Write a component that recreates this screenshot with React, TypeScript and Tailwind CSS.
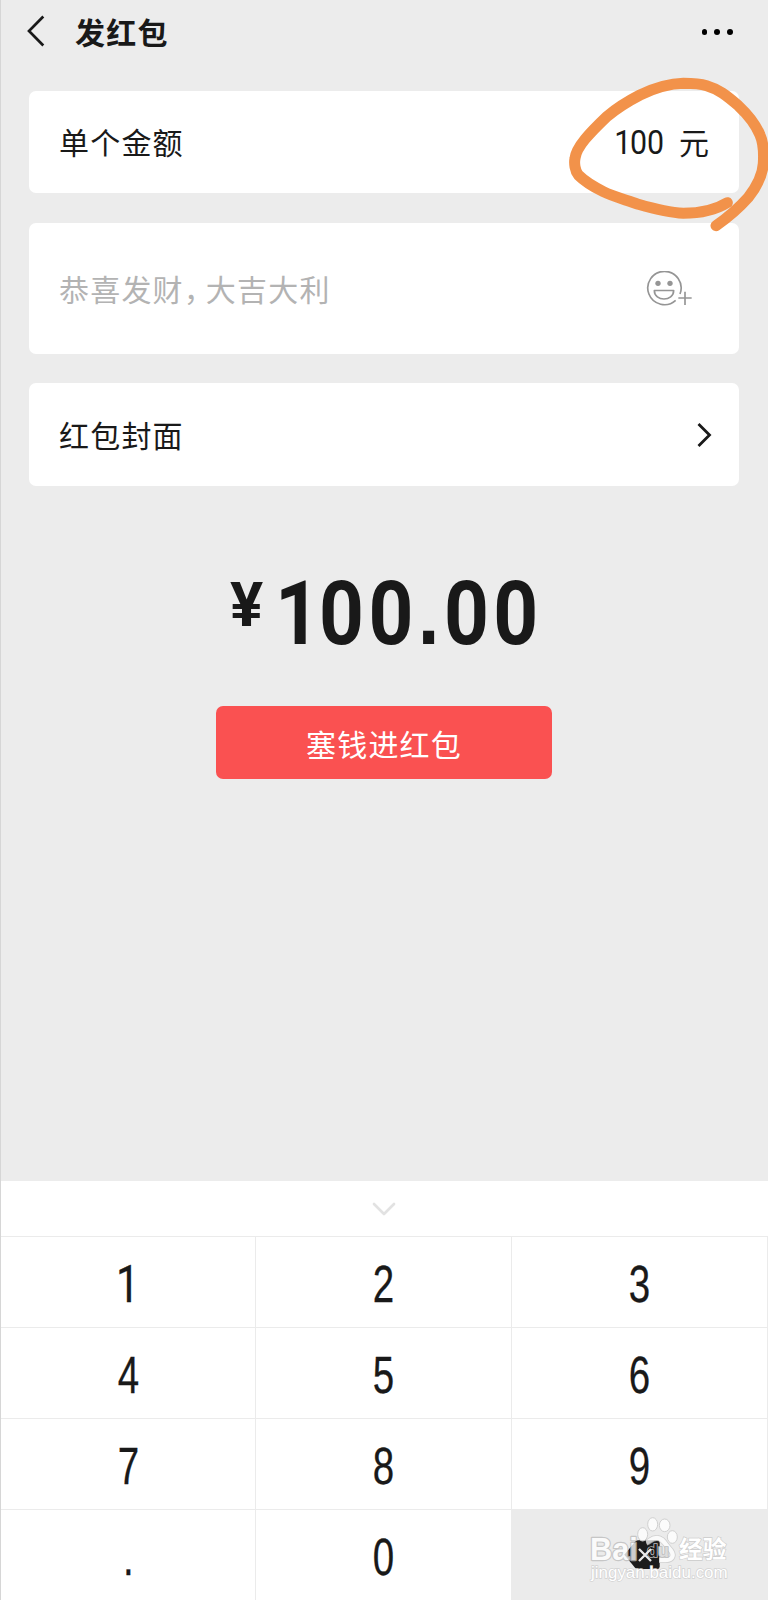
import { ChevronDown } from 'lucide-react';

const keys = ['1', '2', '3', '4', '5', '6', '7', '8', '9', '.', '0'];

function BackIcon() {
  return (
    <svg className="h-8 w-5" viewBox="0 0 20 32" fill="none" stroke="#191919" strokeWidth="2.7">
      <path d="M17.300 1.500 3 16 17.300 30.500" />
    </svg>
  );
}

function EmojiPlusIcon() {
  return (
    <svg className="h-9 w-[46px]" viewBox="0 0 138 108" fill="none" stroke="#959595" strokeWidth="5">
      <path d="M89 88A50 50 0 1 1 102 69" />
      <circle cx="36" cy="37" r="8" fill="#959595" stroke="none" />
      <circle cx="72" cy="37" r="8" fill="#959595" stroke="none" />
      <path d="M25 58.500h58c0 34-58 34-58 0Z" strokeLinejoin="round" />
      <path d="M117 62v40M97 81h40" />
    </svg>
  );
}

// Backspace key with the site mark lying over it
function DeleteKey() {
  return (
    <button className="relative bg-[#ebebeb]">
      <svg className="absolute inset-0 h-[91px] w-64" viewBox="33 327 768 273">
        <path d="M370 464 402 425q4-4 10-4h57q7 0 7 7v72q0 7-7 7h-57q-6 0-10-4Z" fill="#1c1c1c" />
        <g fill="#ffffff" fillOpacity="0.8" stroke="#d0d0d0" strokeWidth="3">
          <ellipse cx="425" cy="403" rx="15" ry="20" />
          <ellipse cx="455" cy="373" rx="15" ry="20" />
          <ellipse cx="491" cy="376" rx="16" ry="19" />
          <ellipse cx="514" cy="411" rx="15" ry="19" />
        </g>
        <g fill="none" opacity="0.75">
          <path d="M436 428c12-4 14-14 32-14s24 18 36 31c18 18 13 35-10 35h-20" stroke="#c6c6c6" strokeWidth="18" />
          <path d="M436 428c12-4 14-14 32-14s24 18 36 31c18 18 13 35-10 35h-20" stroke="#ffffff" strokeWidth="13" />
        </g>
        <text
          x="267"
          y="480"
          fontSize="92"
          className="font-['Liberation_Sans'] font-bold"
          opacity="0.78"
          fill="#ffffff"
          stroke="#bcbcbc"
          strokeWidth="7"
          strokeLinejoin="round"
          paintOrder="stroke"
        >
          Bai
        </text>
        <text x="438" y="470" fontSize="54" className="font-['Liberation_Sans'] font-bold" fill="#1c1c1c" stroke="#bdbdbd" strokeWidth="5" paintOrder="stroke">
          d<tspan fill="#dcdcdc">u</tspan>
        </text>
        <path d="m414 447 36 36m0-36-36 36" stroke="#ebebeb" strokeWidth="7" />
        <text x="534" y="474" fontSize="71" textLength="142" className="font-['Noto_Sans_CJK_SC',sans-serif] font-bold" fill="#ffffff" stroke="#cccccc" strokeWidth="4" paintOrder="stroke">
          经验
        </text>
        <text x="270" y="535" fontSize="47" textLength="410" lengthAdjust="spacingAndGlyphs" className="font-['Liberation_Sans']" fill="#ffffff" stroke="#d2d2d2" strokeWidth="4" paintOrder="stroke">
          jingyan.baidu.com
        </text>
      </svg>
    </button>
  );
}

export default function App() {
  return (
    <div className="relative flex h-[1600px] w-[768px] flex-col overflow-hidden border-l border-[#d6d6d6] bg-[#ececec] font-['Noto_Sans_CJK_SC',sans-serif] text-[#191919]">
      {/* Header */}
      <header className="flex h-[91px] items-start pt-[15px] pr-[35px] pl-[25px]">
        <button>
          <BackIcon />
        </button>
        <h1 className="ml-[29px] text-[30px] leading-8 font-bold tracking-[1.2px]">发红包</h1>
        <button className="mt-3.5 ml-auto flex gap-[7px]">
          <span className="size-[5.8px] rounded-full bg-black" />
          <span className="size-[5.8px] rounded-full bg-black" />
          <span className="size-[5.8px] rounded-full bg-black" />
        </button>
      </header>

      {/* Form */}
      <main className="flex flex-1 flex-col px-7">
        <div className="mr-[1px] flex h-[102px] items-center justify-between rounded-[7px] bg-white px-[30px]">
          <span className="-mt-0.5 text-[30px] leading-none tracking-[1.2px]">单个金额</span>
          <span className="flex items-center">
            <span className="mr-[15px] origin-right scale-x-[0.92] font-[Roboto] text-[33px] leading-none">
              <span className="tracking-[-1.5px]">1</span>00
            </span>
            <span className="-mt-0.5 text-[30px] leading-none">元</span>
          </span>
        </div>

        <div className="mt-[30px] mr-[1px] flex h-[131px] items-center justify-between rounded-[7px] bg-white pr-[47px] pl-[30px]">
          <span className="-mt-0.5 text-[30px] leading-none tracking-[1.2px] text-[#b3b3b3]">
            恭喜发财
            <span className="tracking-[7px] [font-feature-settings:'halt']">，</span>
            大吉大利
          </span>
          <EmojiPlusIcon />
        </div>

        <div className="mt-[29px] mr-[1px] flex h-[103px] items-center justify-between rounded-[7px] bg-white pr-[27px] pl-[30px]">
          <span className="-mt-0.5 text-[30px] leading-none tracking-[1.2px]">红包封面</span>
          <svg className="h-[26px] w-[15px]" viewBox="0 0 15 26" fill="none" stroke="#191919" strokeWidth="2.8">
            <path d="m1.500 2 11 11-11 11" />
          </svg>
        </div>

        {/* Total */}
        <div className="mt-[82px] flex h-[92px] items-start pl-[201px] font-[Roboto] font-bold">
          <span className="mt-[6px] w-[37px] text-[62px] leading-none">¥</span>
          <span className="ml-2 origin-left scale-x-[0.88] text-[89px] leading-[90px] tracking-[5px]">
            <span className="tracking-[-1px]">1</span>00
            <span className="font-['Liberation_Sans']">.</span>00
          </span>
        </div>

        <button className="mt-[46px] ml-[187px] h-[73px] w-[336px] rounded-[7px] bg-[#fa5151] text-[30px] leading-none tracking-[1.2px] text-white">
          塞钱进红包
        </button>
      </main>

      {/* Number pad */}
      <section className="h-[419px] bg-white">
        <div className="flex h-[55px] items-center justify-center pr-0.5">
          <ChevronDown className="h-10 w-11 text-[#e2e2e2]" strokeWidth={1.6} />
        </div>
        <div className="grid h-[364px] grid-cols-[255px_256px_256px] grid-rows-4">
          {keys.map((key) => (
            <button
              key={key}
              className="border-t border-r border-[#ebebeb] pt-1 font-['Liberation_Sans'] text-[52px] leading-none [-webkit-text-stroke:0.3px_#191919]"
            >
              <span className={key === '1' ? 'inline-block scale-x-[0.8] font-[Roboto]' : 'inline-block scale-x-[0.74]'}>
                {key}
              </span>
            </button>
          ))}
          <DeleteKey />
        </div>
      </section>

      {/* Hand-drawn marker around the amount */}
      <svg className="pointer-events-none absolute top-0 left-[539px] h-60 w-[228px]" viewBox="0 0 684 720" fill="none">
        <path
          d="M562 608C520 634 475 640 430 640C385 638 340 626 295 613C260 600 220 590 190 575C160 560 135 545 115 525C105 512 102 490 105 475C109 440 150 398 200 350C230 325 265 303 300 285C340 266 385 251 430 250C460 250 480 251 500 257C535 267 560 287 595 317C625 345 650 380 660 405C669 425 672 455 670 490C668 525 650 560 625 592C600 620 570 648 528 677"
          stroke="#f2924a"
          strokeWidth="33"
          strokeLinecap="round"
          strokeLinejoin="round"
        />
      </svg>
    </div>
  );
}
